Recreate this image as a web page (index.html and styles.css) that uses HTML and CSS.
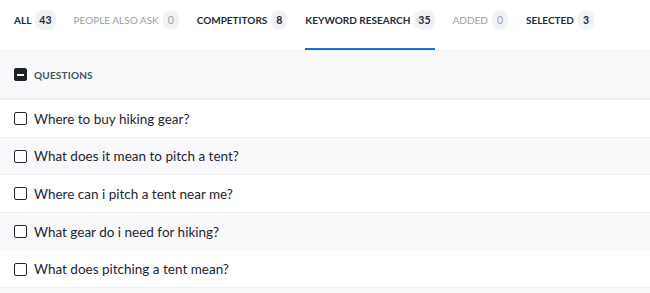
FILE: index.html
```html
<!DOCTYPE html>
<html>
<head>
<meta charset="utf-8">
<link rel="stylesheet" href="styles.css">
</head>
<body>
<div class="tabs">
  <div class="tab"><span class="label">All</span><span class="badge">43</span></div>
  <div class="tab muted"><span class="label">People also ask</span><span class="badge">0</span></div>
  <div class="tab"><span class="label">Competitors</span><span class="badge">8</span></div>
  <div class="tab active"><span class="label">Keyword research</span><span class="badge">35</span></div>
  <div class="tab muted"><span class="label">Added</span><span class="badge">0</span></div>
  <div class="tab"><span class="label">Selected</span><span class="badge">3</span></div>
</div>
<div class="group">
  <span class="cb cb-minus"><span class="minus"></span></span>
  <span class="group-title">Questions</span>
</div>
<div class="list">
  <div class="row"><span class="cb"></span><span class="q">Where to buy hiking gear?</span></div>
  <div class="row alt"><span class="cb"></span><span class="q">What does it mean to pitch a tent?</span></div>
  <div class="row"><span class="cb"></span><span class="q">Where can i pitch a tent near me?</span></div>
  <div class="row alt"><span class="cb"></span><span class="q">What gear do i need for hiking?</span></div>
  <div class="row"><span class="cb"></span><span class="q">What does pitching a tent mean?</span></div>
  <div class="row alt"></div>
</div>
</body>
</html>
```
FILE: styles.css
```css
* { box-sizing: border-box; }
html, body { margin: 0; padding: 0; }
body {
  font-family: Lato, "Open Sans", sans-serif;
  background: #fff;
  width: 650px;
  height: 293px;
  overflow: hidden;
  color: #1f2630;
}
.tabs {
  display: flex;
  gap: 18px;
  padding: 0 14px;
  height: 51px;
  border-bottom: 1px solid #eef0f3;
  white-space: nowrap;
}
.tab {
  display: flex;
  align-items: flex-start;
  gap: 4px;
  padding-top: 10px;
  height: 50px;
  border-bottom: 2px solid transparent;
  font-size: 10px;
  font-weight: 700;
  color: #1f2a37;
}
.tab .label {
  text-transform: uppercase;
  line-height: 20px;
}
.tab.active { border-bottom-color: #1b6ed2; }
.tab.muted { color: #9aa1aa; }
.tab.muted .label { font-weight: 400; }
.badge {
  display: inline-block;
  min-width: 16px;
  height: 20px;
  line-height: 20px;
  padding: 0 4px;
  text-align: center;
  border-radius: 8px;
  background: #f1f2f6;
  font-weight: 700;
  font-size: 10.5px;
}
.tab.muted .badge { font-weight: 400; }
.group {
  display: flex;
  align-items: center;
  gap: 7px;
  height: 49px;
  padding: 0 14px;
  background: #f9f9fb;
  border-bottom: 2px solid #f0f1f4;
}
.group-title {
  text-transform: uppercase;
  font-size: 10px;
  font-weight: 700;
  letter-spacing: 0.2px;
  color: #3a5566;
}
.cb {
  width: 13px;
  height: 13px;
  border: 1.6px solid #222831;
  border-radius: 2px;
  flex: none;
  background: #fff;
  display: inline-flex;
  align-items: center;
  justify-content: center;
}
.cb-minus {
  background: #1c222b;
  border-color: #1c222b;
}
.minus {
  width: 7px;
  height: 2px;
  background: #fff;
}
.row {
  display: flex;
  align-items: center;
  gap: 7px;
  height: 37.6px;
  padding: 1px 14px 0;
  border-bottom: 1px solid #eff0f3;
  background: #fff;
}
.row.alt { background: #f9f9fb; }
.q {
  font-size: 13.5px;
  color: #1f2630;
}
```
